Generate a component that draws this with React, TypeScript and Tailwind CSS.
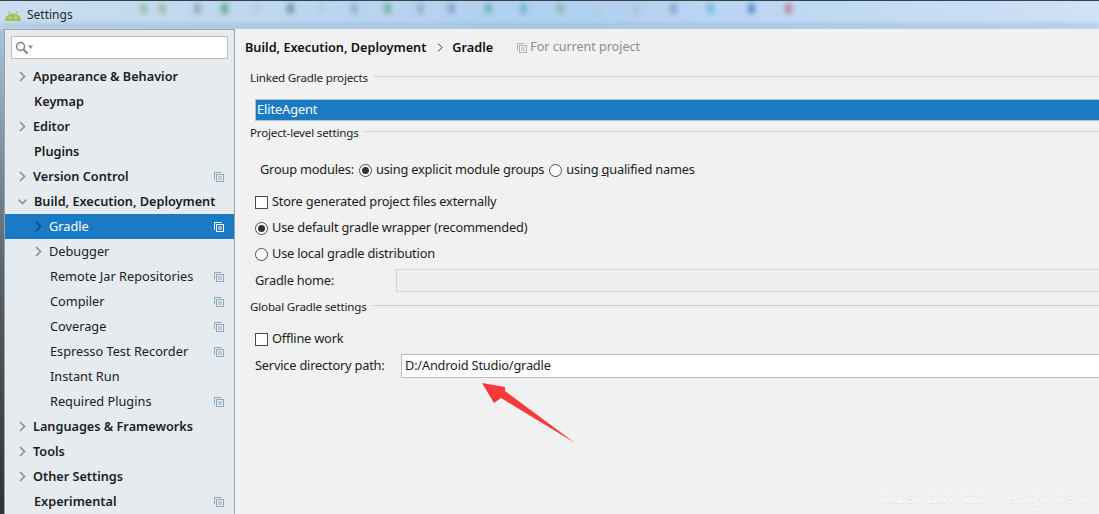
import React from "react";

const font = { fontFamily: '"Noto Sans", "Open Sans", sans-serif' };

function CopyIcon({ white = false, gray = false }: { white?: boolean; gray?: boolean }) {
  const c = white ? "#ffffff" : gray ? "#a9b4bc" : "#8fa9bb";
  return (
    <svg width="10" height="10" viewBox="0 0 10 10" fill="none" stroke={c} strokeWidth="1" className="shrink-0">
      <path d="M0.5 7.5V0.5H7.5" />
      <rect x="2.5" y="2.5" width="7" height="7" />
      <path d="M4 5H8M4 7H8" />
    </svg>
  );
}

function Chevron({ down = false, white = false }: { down?: boolean; white?: boolean }) {
  return (
    <svg width="9" height="11" viewBox="0 0 9 11" fill="none" stroke={white ? "#0f4c80" : "#8e9296"} strokeWidth="1.7" className="shrink-0">
      {down ? <path d="M0.5 3.5L4.5 7.5L8.5 3.5" /> : <path d="M2 1L6.5 5.5L2 10" />}
    </svg>
  );
}

type Item = { label: string; level: 0 | 1; arrow?: "right" | "down"; copy?: boolean; selected?: boolean };

const items: Item[] = [
  { label: "Appearance & Behavior", level: 0, arrow: "right" },
  { label: "Keymap", level: 0 },
  { label: "Editor", level: 0, arrow: "right" },
  { label: "Plugins", level: 0 },
  { label: "Version Control", level: 0, arrow: "right", copy: true },
  { label: "Build, Execution, Deployment", level: 0, arrow: "down" },
  { label: "Gradle", level: 1, arrow: "right", copy: true, selected: true },
  { label: "Debugger", level: 1, arrow: "right" },
  { label: "Remote Jar Repositories", level: 1, copy: true },
  { label: "Compiler", level: 1, copy: true },
  { label: "Coverage", level: 1, copy: true },
  { label: "Espresso Test Recorder", level: 1, copy: true },
  { label: "Instant Run", level: 1 },
  { label: "Required Plugins", level: 1, copy: true },
  { label: "Languages & Frameworks", level: 0, arrow: "right" },
  { label: "Tools", level: 0, arrow: "right" },
  { label: "Other Settings", level: 0, arrow: "right" },
  { label: "Experimental", level: 0, copy: true },
];

function Row({ item }: { item: Item }) {
  const bold = item.level === 0;
  const plainBold = bold && (!item.arrow || item.arrow === "down");
  return (
    <div className={`flex h-[25px] shrink-0 items-center pr-[10px] ${item.selected ? "bg-[#1b7ac4] text-white" : "text-[#1c1c1c]"}`}>
      <div className={`flex items-center ${bold ? "w-[28px] pl-[13px]" : "w-[44px] pl-[29px]"}`}>
        {item.arrow && <Chevron down={item.arrow === "down"} white={item.selected} />}
      </div>
      <span className={`flex-1 whitespace-nowrap ${bold ? "text-[12.7px] font-semibold" : "text-[12.75px]"} ${plainBold || (!bold && !item.arrow) ? "pl-px" : ""}`}>{item.label}</span>
      {item.copy && <CopyIcon white={item.selected} />}
    </div>
  );
}

function SectionTitle({ title, className = "" }: { title: string; className?: string }) {
  return (
    <div className={`flex items-center gap-[6px] pl-[5px] ${className}`}>
      <span className="whitespace-nowrap text-[11.6px] leading-[16px] tracking-[-0.18px]">{title}</span>
      <div className="-mt-[3px] h-px flex-1 bg-[#cfcfcf]" />
    </div>
  );
}

function Radio({ checked = false }: { checked?: boolean }) {
  return (
    <span className="flex h-[13px] w-[13px] shrink-0 items-center justify-center rounded-full border border-[#4a4a4a] bg-white">
      {checked && <span className="h-[7px] w-[7px] rounded-full bg-[#333333]" />}
    </span>
  );
}

function Check() {
  return <span className="h-[13px] w-[13px] shrink-0 border border-[#4a4a4a] bg-white" />;
}

function Option({ control, label, className = "" }: { control: React.ReactNode; label: React.ReactNode; className?: string }) {
  return (
    <div className={`flex h-[18px] items-center gap-[4px] pl-[10px] text-[12.8px] tracking-[-0.2px] ${className}`}>
      {control}
      <span className="whitespace-nowrap">{label}</span>
    </div>
  );
}

const blobs: [number, string][] = [
  [12, "#7fb595"], [28, "#9aa89a"], [20, "#8a949e"], [26, "#3f9a66"], [26, "#b4c8da"], [24, "#5f7f84"], [26, "#b4c8da"], [26, "#7ea2c8"],
  [26, "#5aa57f"], [24, "#8ea4b8"], [30, "#7a8fbb"], [28, "#5fa7a0"], [30, "#6aa7d0"], [32, "#7fb0a4"], [30, "#b4c8da"], [30, "#a9bfd4"],
  [30, "#7f8fc8"], [34, "#62b0d8"], [30, "#3f70c0"], [26, "#b56a6a"],
];

export default function App() {
  return (
    <div style={font} className="relative flex h-[514px] w-[1099px] flex-col overflow-hidden bg-[#f1f1f1] text-[#1c1c1c]">
      {/* title bar */}
      <div className="relative flex h-[29px] shrink-0 items-center gap-[6px] overflow-hidden border-t border-[#3a4046] bg-gradient-to-r from-[#c9deef] via-[#afd0f0] to-[#cfe2f6] pb-[1px] pl-[5px]">
        <div className="absolute left-[140px] top-[2px] flex items-center opacity-70 blur-[2.5px]">
          {blobs.map(([gap, c], i) => (
            <span key={i} className="h-[11px] w-[7px] shrink-0 rounded-sm" style={{ backgroundColor: c, marginRight: gap }} />
          ))}
        </div>
        <div className="absolute inset-x-0 bottom-0 h-[6px] bg-[#9fbbd6] opacity-60 blur-[2px]" />
        <svg width="16" height="10" viewBox="0 0 16 10" className="relative shrink-0 translate-y-[1px]" fill="#9cc25a">
          <path d="M0 10C0 5.5 3.5 2.6 8 2.6S16 5.5 16 10Z" />
          <path d="M3 0L5 3M13 0L11 3" stroke="#9cc25a" strokeWidth="1" />
          <circle cx="5" cy="6.5" r="0.9" fill="#e8f0e0" />
          <circle cx="11" cy="6.5" r="0.9" fill="#e8f0e0" />
        </svg>
        <span className="relative text-[12px] text-[#1c2a33]">Settings</span>
      </div>

      <div className="flex min-h-0 flex-1">
        <div className="w-[4px] shrink-0 bg-gradient-to-b from-[#a9c3dc] via-[#59636b] to-[#2c3338]" />
        {/* sidebar */}
        <aside className="flex w-[231px] shrink-0 flex-col border-l border-t border-r border-[#9aa3aa] bg-[#e6ebf0]">
          <div className="mx-[6px] mt-[6px] flex h-[23px] shrink-0 items-center gap-[1px] border border-[#bdbdbd] bg-white pl-[3px]">
            <svg width="22" height="14" viewBox="0 0 22 14" fill="none" className="shrink-0">
              <circle cx="5.5" cy="5.5" r="4" stroke="#7f7f7f" strokeWidth="1.5" />
              <path d="M8.5 8.5L12.5 12.5" stroke="#7f7f7f" strokeWidth="2" />
              <path d="M13 4.5H18L15.5 8Z" fill="#8a8a8a" />
            </svg>
          </div>
          <div className="mt-[5px] flex flex-col">
            {items.map((it) => (
              <Row key={it.label} item={it} />
            ))}
          </div>
        </aside>

        {/* content */}
        <main className="relative min-w-0 flex-1 pl-[10px]">
          <div className="flex h-[36px] items-center pt-[1px] text-[12.7px]">
            <span className="font-semibold text-[#111111]">Build, Execution, Deployment</span>
            <svg width="6" height="9" viewBox="0 0 6 9" fill="none" stroke="#333333" className="ml-[11px] mr-[9px]">
              <path d="M1 0.5L5 4.5L1 8.5" />
            </svg>
            <span className="font-semibold text-[#111111]">Gradle</span>
            <span className="ml-[24px] flex items-center gap-[3px] text-[12.5px] text-[#8c8c8c]">
              <CopyIcon gray />
              For current project
            </span>
          </div>

          <SectionTitle title="Linked Gradle projects" className="mt-[5px]" />
          <div className="ml-[10px] mt-[13px] flex h-[22px] items-center border border-[#b8c0c6] border-r-0 bg-[#1b7ac4] pl-[1px] text-[12.8px] tracking-[-0.1px] text-white">
            EliteAgent
          </div>
          <SectionTitle title="Project-level settings" className="mt-[4px]" />

          <div className="mt-[19px] flex h-[20px] items-center pl-[15px] text-[12.8px] tracking-[-0.2px]">
            <span className="mr-[5px] whitespace-nowrap">Group modules:</span>
            <Radio checked />
            <span className="ml-[4px] mr-[5px] whitespace-nowrap">using explicit module <u>g</u>roups</span>
            <Radio />
            <span className="ml-[4px] whitespace-nowrap">using <u>q</u>ualified names</span>
          </div>

          <Option control={<Check />} label="Store generated project files externally" className="mt-[13px]" />
          <Option control={<Radio checked />} label="Use default gradle wrapper (recommended)" className="mt-[8px]" />
          <Option control={<Radio />} label="Use local gradle distribution" className="mt-[8px]" />

          <div className="mt-[6px] flex h-[23px] items-center pl-[10px] text-[12.8px] tracking-[-0.2px]">
            <span className="w-[141px] shrink-0 pt-[1px]">Gradle home:</span>
            <div className="h-full flex-1 border border-r-0 border-[#d6d6d6] bg-[#efefef]" />
          </div>

          <SectionTitle title="Global Gradle settings" className="mt-[7px]" />

          <Option control={<Check />} label="Offline work" className="mt-[15px]" />

          <div className="mt-[6px] flex h-[24px] items-center pl-[10px] text-[12.8px] tracking-[-0.2px]">
            <span className="w-[146px] shrink-0 whitespace-nowrap">Service directory path:</span>
            <div className="flex h-full flex-1 items-center border border-r-0 border-[#bdbdbd] bg-white pl-[3px]">
              D:/Android Studio/gradle
            </div>
          </div>
        </main>
      </div>

      {/* annotation arrow */}
      <svg width="110" height="70" viewBox="0 0 110 70" className="absolute left-[475px] top-[378px]">
        <path d="M7 5L30 9L30 13L100 65L26 20L19 25Z" fill="#f93a3a" />
      </svg>

      {/* watermark */}
      <span
        className="absolute left-[880px] top-[486px] whitespace-nowrap text-[15.7px] text-[#f7f7f7] [text-shadow:0_1px_1px_rgba(0,0,0,0.07)]"
        style={{ fontFamily: '"Liberation Sans", sans-serif' }}
      >
        https://blog.csdn.net/tgvincent
      </span>
    </div>
  );
}
